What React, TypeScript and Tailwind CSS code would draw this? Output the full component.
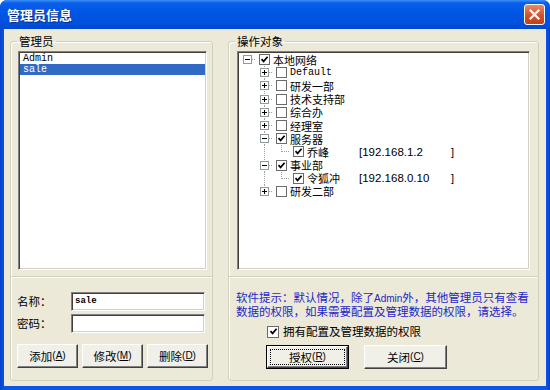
import type { ReactNode } from 'react'

type Cell = { up?: boolean; down?: boolean; right?: boolean; exp?: '+' | '-' }
type Node = { cells: Cell[]; checked: boolean; label: string; mono?: boolean; ip?: string }

const tree: Node[] = [
  { cells: [{ right: true, exp: '-' }], checked: true, label: '本地网络' },
  { cells: [{}, { up: true, down: true, right: true, exp: '+' }], checked: false, label: 'Default', mono: true },
  { cells: [{}, { up: true, down: true, right: true, exp: '+' }], checked: false, label: '研发一部' },
  { cells: [{}, { up: true, down: true, right: true, exp: '+' }], checked: false, label: '技术支持部' },
  { cells: [{}, { up: true, down: true, right: true, exp: '+' }], checked: false, label: '综合办' },
  { cells: [{}, { up: true, down: true, right: true, exp: '+' }], checked: false, label: '经理室' },
  { cells: [{}, { up: true, down: true, right: true, exp: '-' }], checked: true, label: '服务器' },
  { cells: [{}, { up: true, down: true }, { up: true, right: true }], checked: true, label: '乔峰', ip: '192.168.1.2' },
  { cells: [{}, { up: true, down: true, right: true, exp: '-' }], checked: true, label: '事业部' },
  { cells: [{}, { up: true, down: true }, { up: true, right: true }], checked: true, label: '令狐冲', ip: '192.168.0.10' },
  { cells: [{}, { up: true, right: true, exp: '+' }], checked: false, label: '研发二部' },
]

const dot = { stroke: '#a0a0a0', strokeDasharray: '1 1', strokeWidth: 1 }

function Guide({ c }: { c: Cell }) {
  return (
    <svg width="17" height="13" className="shrink-0">
      {c.up && <line x1="8.5" y1="0" x2="8.5" y2="7" {...dot} />}
      {c.down && <line x1="8.5" y1="6" x2="8.5" y2="13" {...dot} />}
      {c.right && <line x1="9" y1="6.5" x2="17" y2="6.5" {...dot} />}
      {c.exp && (
        <g>
          <rect x="4.5" y="2.5" width="8" height="8" fill="#ffffff" stroke="#919b9c" />
          <line x1="6" y1="6.5" x2="11" y2="6.5" stroke="#000" />
          {c.exp === '+' && <line x1="8.5" y1="4" x2="8.5" y2="9" stroke="#000" />}
        </g>
      )}
    </svg>
  )
}

function Tick() {
  return (
    <svg width="9" height="9" viewBox="0 0 9 9">
      <path d="M1.5 4.2 L3.6 6.4 L7.6 1.8" fill="none" stroke="#000" strokeWidth="1.7" />
    </svg>
  )
}

function Box({ checked, size = 'w-[11px] h-[11px]' }: { checked: boolean; size?: string }) {
  return (
    <span className={`${size} flex items-center justify-center bg-white border border-[#6b6b6b]`}>
      {checked && <Tick />}
    </span>
  )
}

const sunken =
  'bg-white border border-t-[#808080] border-l-[#808080] border-r-white border-b-white shadow-[inset_1px_1px_0_#404040,inset_-1px_-1px_0_#d4d0c8]'

const raised =
  'border border-t-white border-l-white border-r-[#404040] border-b-[#404040] shadow-[inset_-1px_-1px_0_#808080]'

function Btn({ w, children }: { w: string; children: ReactNode }) {
  return (
    <button className={`${w} h-[24px] bg-[#f0efe8] ${raised} flex items-center justify-center text-[11.5px] leading-[12px]`}>
      {children}
    </button>
  )
}

function Key({ k }: { k: string }) {
  return (
    <span className="text-[10px] font-['Liberation_Sans',sans-serif]">
      (<u>{k}</u>)
    </span>
  )
}

function Divider() {
  return <div className="h-[2px] border-t border-[#d0d0bf] border-b border-b-white" />
}

export default function App() {
  return (
    <div className="w-[550px] h-[390px] flex flex-col bg-[linear-gradient(90deg,#0842c8_0px,#0a55e6_4px,#0a55e6_546px,#0842c8_550px)] rounded-t-[7px] overflow-hidden font-['Noto_Sans_CJK_SC',sans-serif] text-black">
      {/* Title bar */}
      <div className="h-[29px] flex items-center justify-between pl-[7px] pr-[5px] bg-[linear-gradient(180deg,#3d8ef8_0px,#0a5fe9_3px,#0058e6_10px,#0052df_22px,#0047cf_29px)]">
        <span className="text-white text-[13px] font-bold leading-[14px] [text-shadow:1px_1px_0_#0a2a80]">管理员信息</span>
        <span className="w-[21px] h-[21px] rounded-[3px] border border-white bg-[linear-gradient(180deg,#e98a6c,#d4512b_55%,#c2401b)] flex items-center justify-center">
          <svg width="13" height="13" viewBox="0 0 13 13">
            <path d="M2.5 2.5 L10.5 10.5 M10.5 2.5 L2.5 10.5" stroke="#fff" strokeWidth="2.2" strokeLinecap="square" />
          </svg>
        </span>
      </div>

      <div className="flex-1 mx-[4px] mb-[4px] bg-[#ece9d8] flex pl-[6px] pt-[6px] gap-[15px]">
        {/* 管理员 */}
        <fieldset className="w-[203px] h-[346px] border border-[#d0d0bf] rounded-[3px] flex flex-col shadow-[inset_1px_1px_0_#fff]">
          <legend className="ml-[6px] px-[2px] text-[11.5px] leading-[12px]">管理员</legend>
          <div className={`mt-[4px] ml-[7px] w-[189px] h-[219px] ${sunken} pt-[1px] pl-[1px] pr-[1px] font-['Liberation_Mono',monospace] text-[10px] leading-[11px]`}>
            <div className="h-[11px] pl-[3px]">Admin</div>
            <div className="h-[11px] pl-[3px] bg-[#316ac5] text-white">sale</div>
          </div>
          <div className="mt-[6px]">
            <Divider />
          </div>
          <div className="mt-[14px] pl-[6px] flex flex-col gap-[3px] text-[11.5px]">
            <div className="flex items-center">
              <span className="w-[54px]">名称：</span>
              <div className={`w-[134px] h-[19px] ${sunken} flex items-center pl-[3px] font-['Liberation_Mono',monospace] text-[9px] font-bold`}>sale</div>
            </div>
            <div className="flex items-center">
              <span className="w-[54px]">密码：</span>
              <div className={`w-[134px] h-[19px] ${sunken}`} />
            </div>
          </div>
          <div className="mt-[11px] pl-[6px] flex gap-[4px]">
            <Btn w="w-[61px]">
              添加<Key k="A" />
            </Btn>
            <Btn w="w-[61px]">
              修改<Key k="M" />
            </Btn>
            <Btn w="w-[61px]">
              删除<Key k="D" />
            </Btn>
          </div>
        </fieldset>

        {/* 操作对象 */}
        <fieldset className="w-[311px] h-[346px] border border-[#d0d0bf] rounded-[3px] flex flex-col shadow-[inset_1px_1px_0_#fff]">
          <legend className="ml-[6px] px-[2px] text-[11.5px] leading-[12px]">操作对象</legend>
          <div className={`mt-[4px] ml-[8px] w-[293px] h-[219px] ${sunken} pt-[1px] pl-[1px] text-[11px] leading-[12px]`}>
            {tree.map((n) => (
              <div key={n.label} className="h-[13.2px] flex items-center">
                {n.cells.map((c, i) => (
                  <Guide key={i} c={c} />
                ))}
                <span className="w-[17px] flex justify-center shrink-0">
                  <Box checked={n.checked} />
                </span>
                {n.ip ? (
                  <>
                    <span className="w-[52px]">{n.label}</span>
                    <span className="w-[92px] font-['Liberation_Sans',sans-serif] text-[11.5px]">[{n.ip}</span>
                    <span className="font-['Liberation_Sans',sans-serif]">]</span>
                  </>
                ) : (
                  <span className={n.mono ? "font-['Liberation_Mono',monospace] text-[10px]" : ''}>{n.label}</span>
                )}
              </div>
            ))}
          </div>
          <div className="mt-[6px]">
            <Divider />
          </div>
          <div className="mt-[13px] pl-[7px] text-[11.5px] leading-[12px] text-[#2525c8]">
            软件提示：默认情况，除了<span className="font-['Liberation_Sans',sans-serif] text-[10px]">Admin</span>外，其他管理员只有查看
            <br />
            数据的权限，如果需要配置及管理数据的权限，请选择。
          </div>
          <div className="mt-[8px] pl-[38px] h-[13px] flex items-center text-[11.5px]">
            <Box checked size="w-[12px] h-[12px]" />
            <span className="ml-[4px]">拥有配置及管理数据的权限</span>
          </div>
          <div className="mt-[7px] pl-[37px] flex gap-[15px]">
            <button className="w-[83px] h-[24px] border border-black bg-[#f0efe8] p-0 flex">
              <span className={`flex-1 flex ${raised}`}>
                <span className="flex-1 m-[2px] border border-dotted border-black flex items-center justify-center text-[11.5px] leading-[12px]">
                  授权<Key k="R" />
                </span>
              </span>
            </button>
            <Btn w="w-[83px]">
              关闭<Key k="C" />
            </Btn>
          </div>
        </fieldset>
      </div>
    </div>
  )
}
